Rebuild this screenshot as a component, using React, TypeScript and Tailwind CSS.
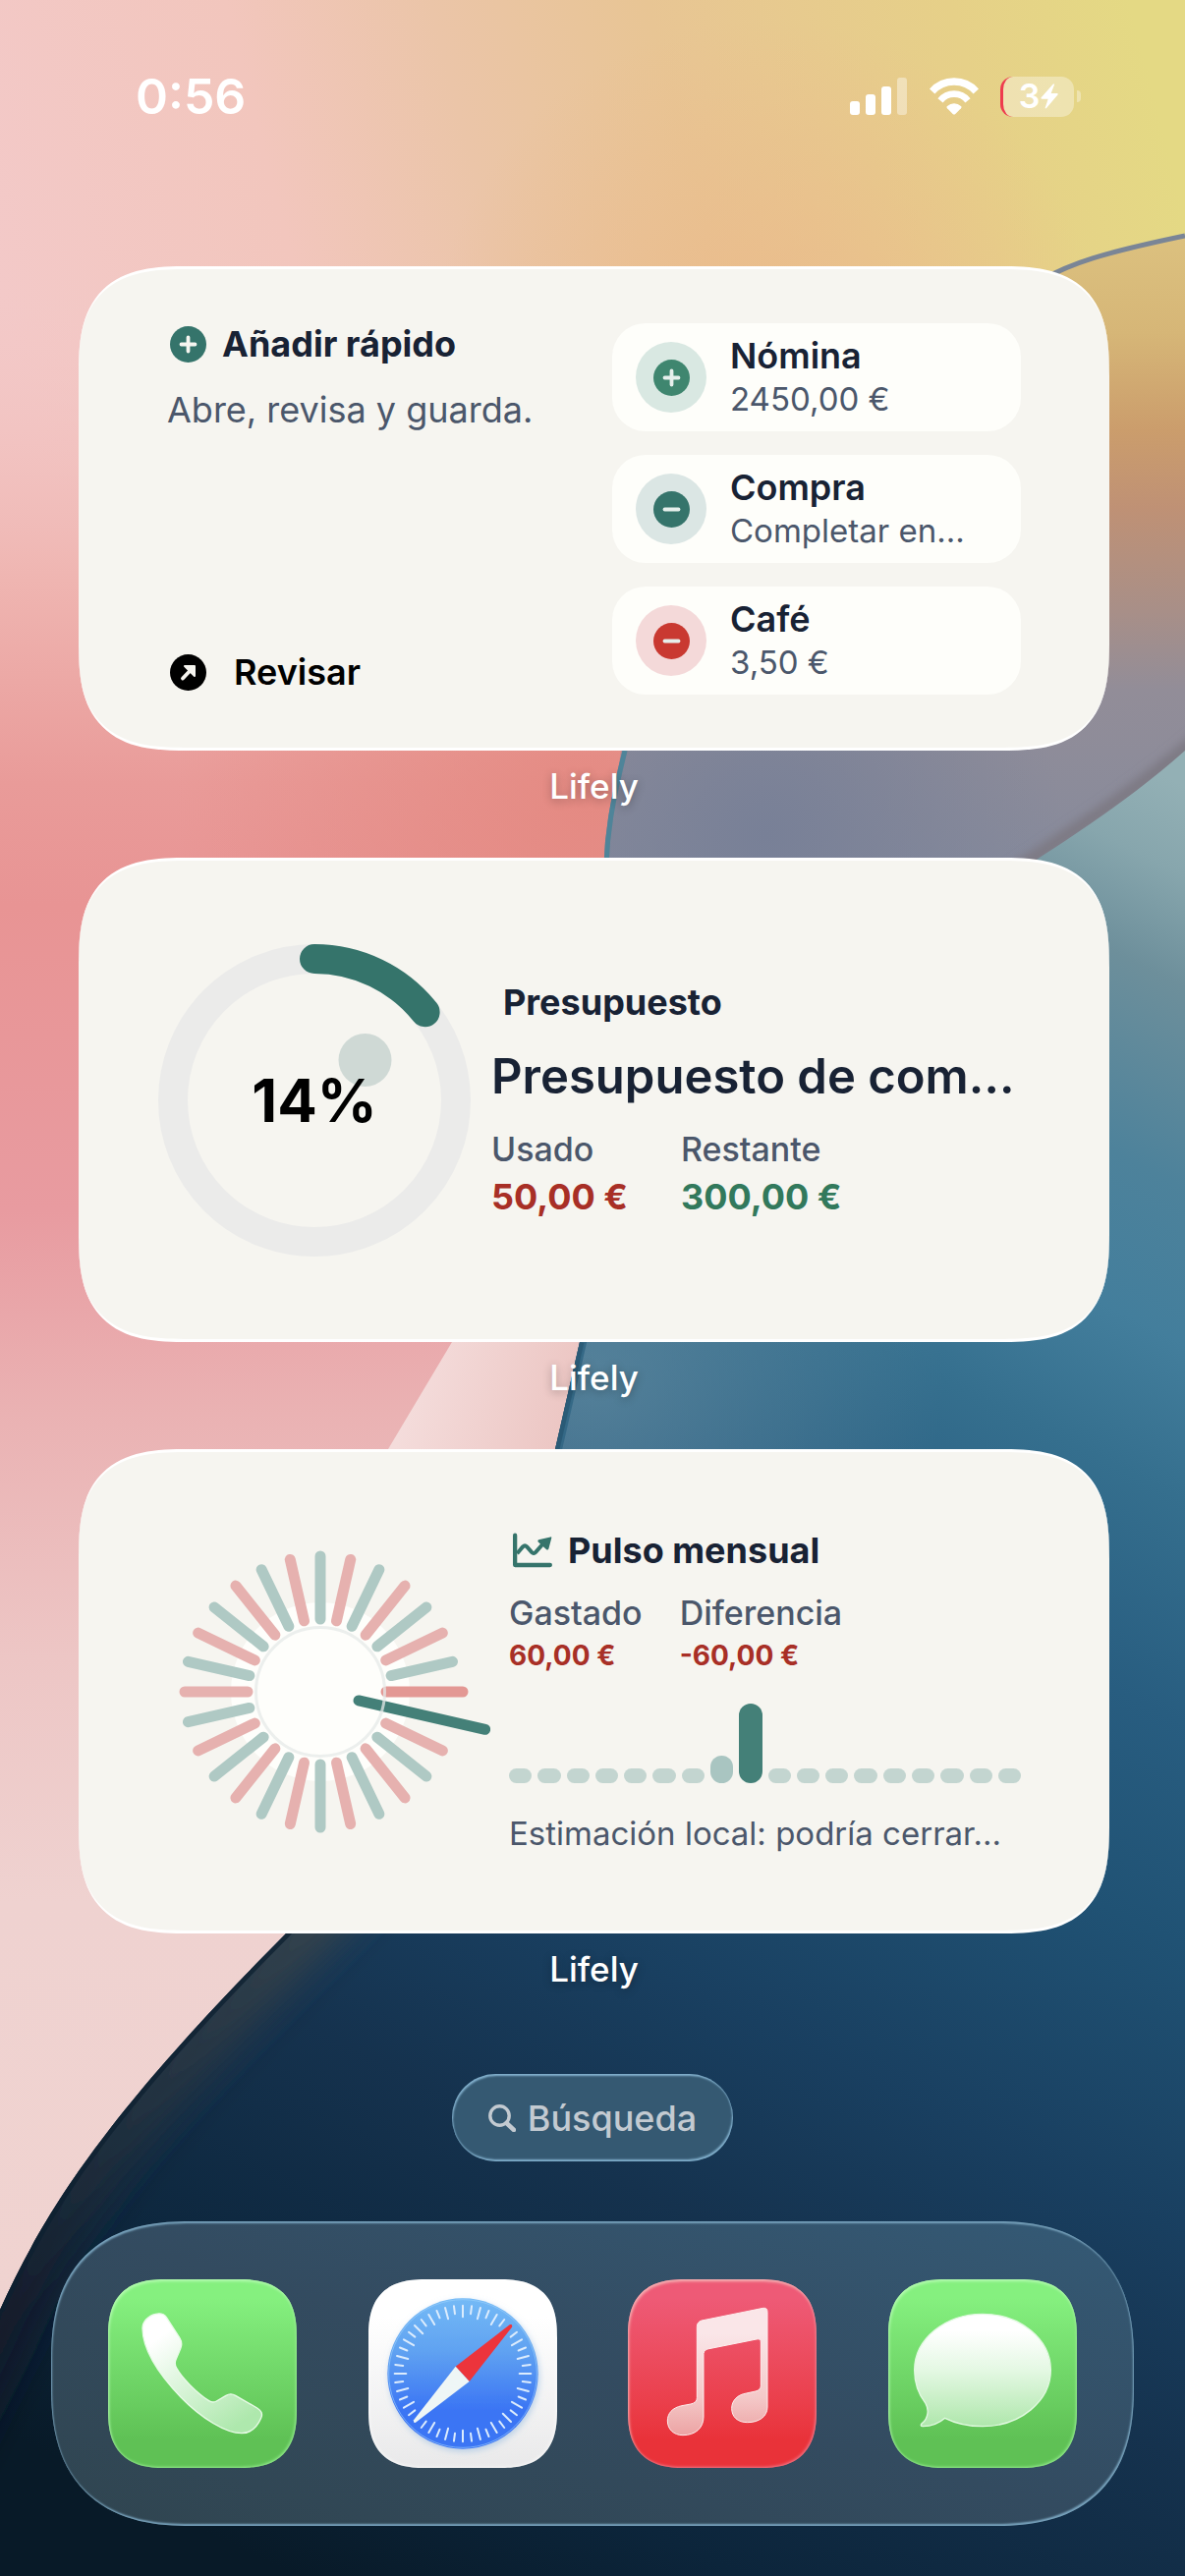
import type { ReactNode } from 'react';

const quickItems = [
  { name: 'Nómina', detail: '2450,00 €', sign: 'plus', ring: 'bg-[#d9e8e2]', dot: '#3f866f' },
  { name: 'Compra', detail: 'Completar en…', sign: 'minus', ring: 'bg-[#dbe6e4]', dot: '#35746b' },
  { name: 'Café', detail: '3,50 €', sign: 'minus', ring: 'bg-[#f4d9d9]', dot: '#c93931' },
];

const dailyBars = [15, 15, 15, 15, 15, 15, 15, 28, 81, 15, 15, 15, 15, 15, 15, 15, 15, 15];

const RAYS = 28;

function Wallpaper() {
  return (
    <svg
      className="absolute inset-0 h-full w-full"
      viewBox="0 0 1206 2622"
      preserveAspectRatio="none"
      aria-hidden="true"
    >
      <defs>
        <linearGradient id="sky" gradientUnits="userSpaceOnUse" x1="0" y1="300" x2="1150" y2="0">
          <stop offset="0" stopColor="#f3c9c8" />
          <stop offset="0.25" stopColor="#f2c6bd" />
          <stop offset="0.42" stopColor="#ebc5a8" />
          <stop offset="0.6" stopColor="#e8c594" />
          <stop offset="0.85" stopColor="#e6d088" />
          <stop offset="1" stopColor="#e4d984" />
        </linearGradient>
        <radialGradient id="peach" gradientUnits="userSpaceOnUse" cx="780" cy="360" r="340">
          <stop offset="0" stopColor="#ebb98a" stopOpacity="0.85" />
          <stop offset="1" stopColor="#ebb98a" stopOpacity="0" />
        </radialGradient>
        <linearGradient id="rose" gradientUnits="userSpaceOnUse" x1="0" y1="280" x2="0" y2="2350">
          <stop offset="0" stopColor="#f3c9c8" stopOpacity="0" />
          <stop offset="0.15" stopColor="#efb5b1" />
          <stop offset="0.25" stopColor="#e99b99" />
          <stop offset="0.31" stopColor="#e89494" />
          <stop offset="0.46" stopColor="#e89ba0" />
          <stop offset="0.56" stopColor="#eab2b3" />
          <stop offset="0.68" stopColor="#edc6c5" />
          <stop offset="0.8" stopColor="#efd2d0" />
          <stop offset="1" stopColor="#f0d3d0" />
        </linearGradient>
        <radialGradient id="coral" gradientUnits="userSpaceOnUse" cx="600" cy="810" r="420">
          <stop offset="0" stopColor="#e3867d" stopOpacity="0.8" />
          <stop offset="1" stopColor="#e3867d" stopOpacity="0" />
        </radialGradient>
        <linearGradient id="petal" gradientUnits="userSpaceOnUse" x1="0" y1="240" x2="0" y2="900">
          <stop offset="0" stopColor="#dcc17f" />
          <stop offset="0.15" stopColor="#d6b677" />
          <stop offset="0.3" stopColor="#cb9d6c" />
          <stop offset="0.42" stopColor="#bf9175" />
          <stop offset="0.58" stopColor="#a88f88" />
          <stop offset="0.7" stopColor="#928d98" />
          <stop offset="1" stopColor="#858a9c" />
        </linearGradient>
        <radialGradient id="violet" gradientUnits="userSpaceOnUse" cx="780" cy="850" r="300">
          <stop offset="0" stopColor="#788097" />
          <stop offset="1" stopColor="#788097" stopOpacity="0" />
        </radialGradient>
        <linearGradient id="sea" gradientUnits="userSpaceOnUse" x1="1206" y1="800" x2="300" y2="2622">
          <stop offset="0" stopColor="#93b0b5" />
          <stop offset="0.04" stopColor="#87a6ad" />
          <stop offset="0.09" stopColor="#6d8f9b" />
          <stop offset="0.18" stopColor="#4d829b" />
          <stop offset="0.25" stopColor="#437e9c" />
          <stop offset="0.32" stopColor="#356f8e" />
          <stop offset="0.42" stopColor="#285d80" />
          <stop offset="0.52" stopColor="#205274" />
          <stop offset="0.65" stopColor="#193f60" />
          <stop offset="0.75" stopColor="#15324e" />
          <stop offset="0.9" stopColor="#0c253b" />
          <stop offset="1" stopColor="#081a28" />
        </linearGradient>
        <radialGradient id="mist" gradientUnits="userSpaceOnUse" cx="600" cy="1400" r="360">
          <stop offset="0" stopColor="#668ea3" stopOpacity="0.7" />
          <stop offset="1" stopColor="#668ea3" stopOpacity="0" />
        </radialGradient>
        <linearGradient id="sliver" gradientUnits="userSpaceOnUse" x1="420" y1="1400" x2="580" y2="1440">
          <stop offset="0" stopColor="#f4dcdb" />
          <stop offset="1" stopColor="#ecc6c3" />
        </linearGradient>
        <linearGradient id="rim" gradientUnits="userSpaceOnUse" x1="0" y1="1968" x2="0" y2="2340">
          <stop offset="0" stopColor="#3a444a" stopOpacity="0.85" />
          <stop offset="0.6" stopColor="#25303a" stopOpacity="0.7" />
          <stop offset="1" stopColor="#151b2a" stopOpacity="0.8" />
        </linearGradient>
        <filter id="soft" x="-20%" y="-20%" width="140%" height="140%">
          <feGaussianBlur stdDeviation="18" />
        </filter>
        <filter id="edge" x="-20%" y="-20%" width="140%" height="140%">
          <feGaussianBlur stdDeviation="5" />
        </filter>
        <clipPath id="seaClip">
          <path d="M1206 764C1120 840 1040 880 960 940C780 1070 640 1180 590 1366L565 1475C510 1720 410 1840 291 1968C120 2140 50 2240 0 2351V2622H1206Z" />
        </clipPath>
      </defs>
      <rect width="1206" height="2622" fill="url(#sky)" />
      <rect width="1206" height="700" fill="url(#peach)" />
      <rect y="280" width="700" height="2342" fill="url(#rose)" />
      <rect y="390" width="700" height="840" fill="url(#coral)" />
      <path d="M480 1330L460 1366L395 1475L380 1520H570L600 1330Z" fill="url(#sliver)" />
      <path
        d="M1206 240C1120 258 1090 268 1060 285C840 400 680 560 636 764C622 820 618 850 617 880L600 1300L1206 1000Z"
        fill="url(#petal)"
      />
      <path d="M1206 764V700H640L617 880L610 1100L960 940Z" fill="url(#violet)" />
      <path
        d="M1206 240C1120 258 1090 268 1060 285C840 400 680 560 636 764C622 820 618 850 617 880"
        fill="none"
        stroke="#7a8596"
        strokeWidth="5"
      />
      <path d="M636 764C622 820 618 850 617 880" fill="none" stroke="#4f8499" strokeWidth="5" />
      <path
        d="M1226 746C1120 836 1040 876 960 936"
        fill="none"
        stroke="#7d7983"
        strokeWidth="14"
        filter="url(#edge)"
      />
      <g clipPath="url(#seaClip)">
        <rect y="740" width="1206" height="1882" fill="url(#sea)" />
        <rect y="1000" x="200" width="800" height="800" fill="url(#mist)" />
        <path
          d="M500 1700C440 1830 380 1900 311 1968C140 2140 60 2240 0 2381L-60 2500"
          fill="none"
          stroke="url(#rim)"
          strokeWidth="54"
          filter="url(#soft)"
        />
        <path
          d="M590 1366L565 1475C510 1720 410 1840 291 1968C120 2140 50 2240 0 2351"
          fill="none"
          stroke="#0e2030"
          strokeWidth="9"
          opacity="0.75"
        />
        <path d="M596 1340L565 1475" stroke="#2f6482" strokeWidth="14" opacity="0.8" />
      </g>
    </svg>
  );
}

function StatusBar() {
  return (
    <header className="flex h-[196px] items-center justify-between pr-[106px] pl-[138px] text-white">
      <time className="text-[50px] leading-none font-semibold">0:56</time>
      <div className="flex items-center gap-[22px]">
        <svg className="h-[38px] w-[59px]" viewBox="0 0 59 38" fill="white" aria-label="Señal">
          <rect x="0" y="24" width="10" height="14" rx="3" />
          <rect x="16" y="17" width="10" height="21" rx="3" />
          <rect x="32" y="9" width="10" height="29" rx="3" />
          <rect x="48" y="0" width="10" height="38" rx="3" opacity="0.4" />
        </svg>
        <svg className="h-[38px] w-[50px]" viewBox="0 0 150 112" aria-label="Wi-Fi">
          <path d="M8 41A90 90 0 0 1 142 41" fill="none" stroke="white" strokeWidth="22" />
          <path d="M33 69A54 54 0 0 1 117 69" fill="none" stroke="white" strokeWidth="20" />
          <path d="M53 87Q75 69 97 87Q99 90 96 93L79 110Q75 113 71 110L54 93Q51 90 53 87Z" fill="white" />
        </svg>
        <div className="flex items-center gap-[3px]">
          <div className="flex h-[41px] w-[75px] items-center justify-center gap-px overflow-hidden rounded-[13px] border-l-3 border-[#ee3b4f] bg-white/35">
            <span className="text-[34px] leading-none font-semibold">3</span>
            <svg className="h-[26px] w-[18px]" viewBox="0 0 54 76" fill="white">
              <path d="M38 1L2 42Q0 46 5 46H23L14 73Q14 77 18 74L53 33Q54 29 50 29H32L42 3Q42 -2 38 1Z" />
            </svg>
          </div>
          <div className="h-[12px] w-[4px] rounded-r-full bg-white/35" />
        </div>
      </div>
    </header>
  );
}

function Widget({ children }: { children: ReactNode }) {
  return (
    <section className="flex flex-col">
      <div className="flex h-[493px] rounded-[84px] border-y-3 border-white bg-[#f6f5f0] pr-[90px] supports-[corner-shape:squircle]:rounded-[112px] supports-[corner-shape:squircle]:[corner-shape:superellipse(1.5)]">
        {children}
      </div>
      <h2 className="pt-[12px] pb-[49px] text-center text-[35px] leading-[48px] font-medium text-white [text-shadow:0_2px_10px_rgba(0,0,0,0.3)]">
        Lifely
      </h2>
    </section>
  );
}

function SignIcon({ sign, color, mark }: { sign: string; color: string; mark: string }) {
  return (
    <svg className="h-[37px] w-[37px] shrink-0" viewBox="0 0 37 37" aria-hidden="true">
      <circle cx="18.5" cy="18.5" r="18.5" fill={color} />
      <path
        d={sign === 'plus' ? 'M11.5 18.5H25.5M18.5 11.5V25.5' : 'M11.5 18.5H25.5'}
        stroke={mark}
        strokeWidth="3.8"
        strokeLinecap="round"
      />
    </svg>
  );
}

function QuickAdd() {
  return (
    <div className="flex grow justify-between pt-[55px] pl-[90px]">
      <div className="flex h-[380px] flex-col">
        <div className="flex items-center gap-[16px] pl-[3px]">
          <SignIcon sign="plus" color="#35746b" mark="#f6f5f0" />
          <h3 className="text-[36px] leading-[42px] font-bold text-[#182234]">Añadir rápido</h3>
        </div>
        <p className="mt-6 text-[36px] leading-[44px] text-[#4b576b]">Abre, revisa y guarda.</p>
        <button className="mt-auto flex items-center gap-[28px] pl-[3px] text-black">
          <svg className="h-[37px] w-[37px]" viewBox="0 0 37 37" aria-hidden="true">
            <circle cx="18.5" cy="18.5" r="18.5" fill="black" />
            <path
              d="M13 24.5L23 14"
              fill="none"
              stroke="#f6f5f0"
              strokeWidth="3.8"
              strokeLinecap="round"
            />
            <path
              d="M15 12H25V22Z"
              fill="#f6f5f0"
              stroke="#f6f5f0"
              strokeWidth="2"
              strokeLinejoin="round"
            />
          </svg>
          <span className="text-[36px] leading-[50px] font-semibold">Revisar</span>
        </button>
      </div>
      <ul className="flex w-[416px] flex-col gap-6">
        {quickItems.map((item) => (
          <li key={item.name}>
            <button className="flex h-[110px] w-full items-center gap-[24px] rounded-[34px] bg-[#fefefa] pl-[24px] text-left">
              <span className={`flex h-[72px] w-[72px] items-center justify-center rounded-full ${item.ring}`}>
                <SignIcon sign={item.sign} color={item.dot} mark="#e6efec" />
              </span>
              <span className="flex flex-col leading-[44px]">
                <span className="text-[36px] font-semibold text-[#182234]">{item.name}</span>
                <span className="text-[33px] text-[#4b576b]">{item.detail}</span>
              </span>
            </button>
          </li>
        ))}
      </ul>
    </div>
  );
}

function Budget() {
  return (
    <div className="flex grow items-center gap-[21px] pl-[81px]">
      <div className="relative flex h-[318px] w-[318px] shrink-0 items-center justify-center">
        <svg className="absolute inset-0" viewBox="0 0 318 318" aria-hidden="true">
          <circle cx="159" cy="159" r="144" fill="none" stroke="#ebebea" strokeWidth="30" />
          <path
            d="M159 15A144 144 0 0 1 271.6 69.2"
            fill="none"
            stroke="#35746b"
            strokeWidth="30"
            strokeLinecap="round"
          />
          <circle cx="210.5" cy="118" r="27" fill="#cfd9d5" />
        </svg>
        <span className="relative text-[60px] leading-none font-bold text-black">14%</span>
      </div>
      <div className="flex flex-col">
        <h3 className="pl-3 text-[36px] leading-[44px] font-bold text-[#182234]">Presupuesto</h3>
        <p className="mt-[22px] text-[49px] leading-[64px] font-semibold whitespace-nowrap text-[#182234]">
          Presupuesto de com…
        </p>
        <dl className="mt-[18px] flex gap-[54px] leading-[48px]">
          <div>
            <dt className="text-[34px] font-medium text-[#4b576b]">Usado</dt>
            <dd className="text-[36px] font-bold text-[#a82f26]">50,00 €</dd>
          </div>
          <div>
            <dt className="text-[34px] font-medium text-[#4b576b]">Restante</dt>
            <dd className="text-[36px] font-bold text-[#32795c]">300,00 €</dd>
          </div>
        </dl>
      </div>
    </div>
  );
}

function PulseDial() {
  return (
    <svg className="h-[318px] w-[318px] shrink-0 overflow-visible" viewBox="-159 -159 318 318" aria-hidden="true">
      <circle r="91" fill="#fefefb" />
      {Array.from({ length: RAYS }, (_, i) => {
        const today = i === 8;
        const peak = i === 7;
        const color = today ? '#448078' : peak ? '#e39894' : i % 2 ? '#e6b1af' : '#afc9c4';
        return (
          <line
            key={i}
            x1="0"
            x2="0"
            y1={today ? -40 : peak ? -67 : -74}
            y2={today ? -172 : peak ? -145 : -138}
            stroke={color}
            strokeWidth="11"
            strokeLinecap="round"
            transform={`rotate(${(i * 360) / RAYS})`}
          />
        );
      })}
      <circle r="65.5" fill="none" stroke="#e6e9e8" strokeOpacity="0.75" strokeWidth="3" />
    </svg>
  );
}

function MonthPulse() {
  return (
    <div className="flex grow items-center gap-[33px] pl-[87px]">
      <PulseDial />
      <div className="flex grow flex-col">
        <div className="flex items-center gap-4 pl-[4px]">
          <svg className="h-[36px] w-[40px]" viewBox="0 0 112 98" fill="none" stroke="#35746b" aria-hidden="true">
            <path d="M6 6V91H106" strokeWidth="12" strokeLinecap="round" strokeLinejoin="round" />
            <path d="M12 58L28 39Q34 33 40 39L54 55Q59 60 65 54L88 28" strokeWidth="11" />
            <path d="M73 19L107 11Q111 10 110 14L102 44Q100 50 95 46L72 25Q69 21 73 19Z" fill="#35746b" stroke="none" />
          </svg>
          <h3 className="text-[36px] leading-[44px] font-bold text-[#182234]">Pulso mensual</h3>
        </div>
        <dl className="mt-5 flex gap-[38px]">
          <div>
            <dt className="text-[34px] leading-[44px] font-medium text-[#4b576b]">Gastado</dt>
            <dd className="text-[28px] leading-[42px] font-bold text-[#a82f26]">60,00 €</dd>
          </div>
          <div>
            <dt className="text-[34px] leading-[44px] font-medium text-[#4b576b]">Diferencia</dt>
            <dd className="text-[28px] leading-[42px] font-bold text-[#a82f26]">-60,00 €</dd>
          </div>
        </dl>
        <div className="mt-[28px] flex h-[81px] items-end gap-[6px]">
          {dailyBars.map((height, i) => (
            <div
              key={i}
              className={`grow rounded-[12px] ${height > 50 ? 'bg-[#448078]' : height > 20 ? 'bg-[#a9c5c1]' : 'bg-[#c3d5d0]'}`}
              style={{ height }}
            />
          ))}
        </div>
        <p className="mt-[29px] text-[33px] leading-[44px] whitespace-nowrap text-[#4b576b]">
          Estimación local: podría cerrar…
        </p>
      </div>
    </div>
  );
}

function AppIcon({ label, tile, children }: { label: string; tile: string; children: ReactNode }) {
  return (
    <button
      aria-label={label}
      className={`h-[192px] w-[192px] rounded-[46px] supports-[corner-shape:squircle]:rounded-[60px] supports-[corner-shape:squircle]:[corner-shape:superellipse(1.4)] ${tile}`}
    >
      <svg viewBox="0 0 576 576" aria-hidden="true">
        {children}
      </svg>
    </button>
  );
}

function Dock() {
  return (
    <nav className="mx-[52px] mt-[61px] flex h-[310px] items-center justify-between rounded-[120px] bg-linear-to-tr from-[#304550] via-[#334b60] to-[#345a76] px-[58px] shadow-[inset_1px_2px_2px_#7aa5bf,inset_-1px_-2px_2px_#7aa5bf] supports-[corner-shape:squircle]:rounded-[142px] supports-[corner-shape:squircle]:[corner-shape:superellipse(1.3)]">
      <AppIcon
        label="Teléfono"
        tile="bg-linear-to-b from-[#85f07f] from-10% to-[#5fc155] to-85% shadow-[inset_1px_2px_3px_#b4fbb0,inset_-1px_-1px_3px_#92ea8c]"
      >
        <defs>
          <linearGradient id="phoneFill" x1="0" y1="0" x2="0.7" y2="1">
            <stop offset="0.2" stopColor="#ffffff" />
            <stop offset="1" stopColor="#aee8ad" />
          </linearGradient>
        </defs>
        <path
          d="M145 106C158 103 170 104 178 116L218 178C226 191 227 199 221 212L207 245C203 254 204 262 209 271C225 300 270 347 308 371C316 376 322 377 331 372L360 355C370 349 379 349 389 355L455 393C470 402 473 411 467 424C455 452 438 470 408 470C360 470 285 425 222 360C150 285 106 210 105 150C105 130 122 111 145 106Z"
          fill="url(#phoneFill)"
          stroke="#e9fbe8"
          strokeWidth="4"
        />
      </AppIcon>
      <AppIcon label="Safari" tile="bg-linear-to-b from-white from-20% to-[#e9e9ea] shadow-[inset_0_0_4px_white]">
        <defs>
          <linearGradient id="compass" x1="0" y1="0" x2="0" y2="1">
            <stop offset="0" stopColor="#74baf6" />
            <stop offset="0.35" stopColor="#60a2f1" />
            <stop offset="0.75" stopColor="#3a74f4" />
            <stop offset="1" stopColor="#3a74f4" />
          </linearGradient>
          <filter id="compassGlow" x="-20%" y="-20%" width="140%" height="140%">
            <feDropShadow dx="4" dy="8" stdDeviation="9" floodColor="#8fb8e0" floodOpacity="0.55" />
          </filter>
        </defs>
        <circle cx="288" cy="288" r="230" fill="url(#compass)" filter="url(#compassGlow)" />
        <circle cx="288" cy="288" r="226" fill="none" stroke="#9fd2fb" strokeWidth="3" opacity="0.6" />
        {Array.from({ length: 48 }, (_, i) =>
          i === 6 || i === 30 ? null : (
            <line
              key={i}
              x1="288"
              x2="288"
              y1="80"
              y2={i % 2 ? 104 : 115}
              stroke="#dcecfd"
              strokeWidth="6"
              strokeLinecap="round"
              transform={`rotate(${i * 7.5} 288 288)`}
            />
          ),
        )}
        <path d="M266 266L432 138Q441 136 438 146L308 312Z" fill="#ec343c" />
        <path d="M266 266L308 312L144 437Q136 440 138 430Z" fill="#eef6f6" />
      </AppIcon>
      <AppIcon
        label="Música"
        tile="bg-linear-to-b from-[#ee5a76] from-10% to-[#e93239] to-85% shadow-[inset_1px_2px_3px_#f6b5b6,inset_-1px_-1px_3px_#ef7587]"
      >
        <defs>
          <linearGradient id="noteFill" x1="0" y1="0" x2="0" y2="1">
            <stop offset="0.2" stopColor="#fae6e8" />
            <stop offset="0.7" stopColor="#f4c9c9" />
            <stop offset="1" stopColor="#eca3a3" />
          </linearGradient>
        </defs>
        <path
          d="M211 145Q211 130 225 126L413 88Q426 86 426 100L426 390C426 418 402 437 365 437C335 437 317 420 317 394C317 370 335 352 362 348L390 342Q406 338 406 325L406 192Q406 180 393 183L243 213Q231 216 231 227L231 420C231 455 205 476 168 476C140 476 121 458 121 432C121 410 135 392 165 386L192 381Q211 377 211 362Z"
          fill="url(#noteFill)"
          stroke="#fdeeee"
          strokeWidth="3"
        />
      </AppIcon>
      <AppIcon
        label="Mensajes"
        tile="bg-linear-to-b from-[#85f07f] from-10% to-[#5fc155] to-85% shadow-[inset_1px_2px_3px_#b4fbb0,inset_-1px_-1px_3px_#92ea8c]"
      >
        <defs>
          <linearGradient id="bubbleFill" x1="0" y1="0" x2="0" y2="1">
            <stop offset="0.15" stopColor="#ffffff" />
            <stop offset="0.5" stopColor="#e4f8e3" />
            <stop offset="1" stopColor="#afe7ac" />
          </linearGradient>
        </defs>
        <path
          d="M288 106C403 106 496 183 496 277C496 372 403 449 288 449C245 449 205 440 173 424C155 440 130 449 106 449C98 449 98 444 104 439C122 425 125 398 114 379C91 350 80 315 80 277C80 183 173 106 288 106Z"
          fill="url(#bubbleFill)"
          stroke="#e2f9e1"
          strokeWidth="4"
        />
      </AppIcon>
    </nav>
  );
}

export default function App() {
  return (
    <div className="relative min-h-screen overflow-hidden font-[Inter,sans-serif]">
      <Wallpaper />
      <div className="relative flex flex-col pb-[51px]">
        <StatusBar />
        <main className="mt-[75px] flex flex-col pr-[77px] pl-[80px]">
          <Widget>
            <QuickAdd />
          </Widget>
          <Widget>
            <Budget />
          </Widget>
          <Widget>
            <MonthPulse />
          </Widget>
        </main>
        <button className="mx-auto mt-[34px] flex h-[89px] w-[286px] items-center justify-center gap-3 rounded-full bg-[#355972] text-[#c3cad1] shadow-[inset_1px_2px_2px_#82b0cd,inset_-1px_-2px_2px_#82b0cd]">
          <svg className="h-[28px] w-[28px]" viewBox="0 0 28 28" fill="none" stroke="currentColor" aria-hidden="true">
            <circle cx="11.5" cy="11.5" r="9.7" strokeWidth="3.4" />
            <path d="M18.5 19L26 26" strokeWidth="4.5" strokeLinecap="round" />
          </svg>
          <span className="text-[36px] leading-[44px] font-medium">Búsqueda</span>
        </button>
        <Dock />
      </div>
    </div>
  );
}
